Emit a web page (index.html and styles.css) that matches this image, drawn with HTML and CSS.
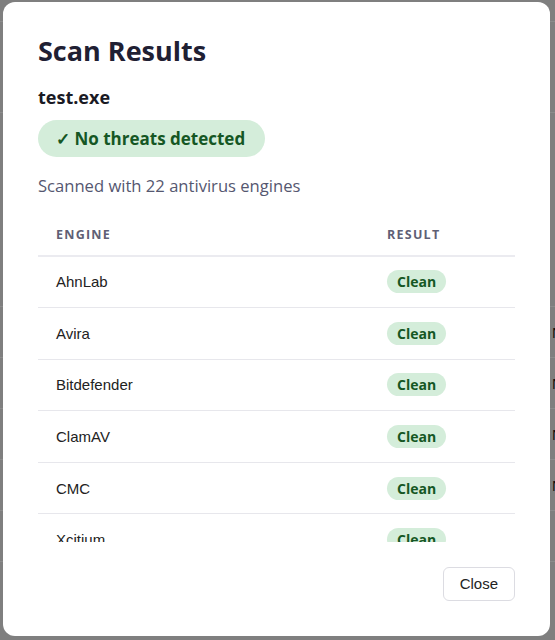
FILE: index.html
```html
<!DOCTYPE html>
<html lang="en">
<head>
<meta charset="utf-8">
<title>Scan Results</title>
<link rel="stylesheet" href="styles.css">
</head>
<body>
<div class="page">
  <div class="page-top"></div>
  <div class="page-section"></div>
  <div class="page-gap"></div>
  <div class="page-row"><span>N</span></div>
  <div class="page-row"><span>N</span></div>
  <div class="page-row"><span>N</span></div>
  <div class="page-row"><span>N</span></div>
  <div class="page-row"></div>
</div>

<div class="overlay">
  <div class="modal" role="dialog" aria-labelledby="title">
    <h1 class="title" id="title">Scan Results</h1>
    <div class="filename">test.exe</div>
    <div class="status">✓ No threats detected</div>
    <p class="summary">Scanned with 22 antivirus engines</p>
    <div class="results">
      <div class="row head">
        <div class="cell">Engine</div>
        <div class="cell">Result</div>
      </div>
      <div class="row"><div class="cell">AhnLab</div><div class="cell"><span class="pill">Clean</span></div></div>
      <div class="row"><div class="cell">Avira</div><div class="cell"><span class="pill">Clean</span></div></div>
      <div class="row"><div class="cell">Bitdefender</div><div class="cell"><span class="pill">Clean</span></div></div>
      <div class="row"><div class="cell">ClamAV</div><div class="cell"><span class="pill">Clean</span></div></div>
      <div class="row"><div class="cell">CMC</div><div class="cell"><span class="pill">Clean</span></div></div>
      <div class="row"><div class="cell">Xcitium</div><div class="cell"><span class="pill">Clean</span></div></div>
      <div class="row"><div class="cell">DrWeb</div><div class="cell"><span class="pill">Clean</span></div></div>
      <div class="row"><div class="cell">Emsisoft</div><div class="cell"><span class="pill">Clean</span></div></div>
      <div class="row"><div class="cell">ESET-NOD32</div><div class="cell"><span class="pill">Clean</span></div></div>
      <div class="row"><div class="cell">F-Secure</div><div class="cell"><span class="pill">Clean</span></div></div>
      <div class="row"><div class="cell">Fortinet</div><div class="cell"><span class="pill">Clean</span></div></div>
      <div class="row"><div class="cell">GData</div><div class="cell"><span class="pill">Clean</span></div></div>
      <div class="row"><div class="cell">Ikarus</div><div class="cell"><span class="pill">Clean</span></div></div>
      <div class="row"><div class="cell">K7AntiVirus</div><div class="cell"><span class="pill">Clean</span></div></div>
      <div class="row"><div class="cell">Kaspersky</div><div class="cell"><span class="pill">Clean</span></div></div>
      <div class="row"><div class="cell">Malwarebytes</div><div class="cell"><span class="pill">Clean</span></div></div>
      <div class="row"><div class="cell">McAfee</div><div class="cell"><span class="pill">Clean</span></div></div>
      <div class="row"><div class="cell">Microsoft</div><div class="cell"><span class="pill">Clean</span></div></div>
      <div class="row"><div class="cell">Panda</div><div class="cell"><span class="pill">Clean</span></div></div>
      <div class="row"><div class="cell">Sophos</div><div class="cell"><span class="pill">Clean</span></div></div>
      <div class="row"><div class="cell">Symantec</div><div class="cell"><span class="pill">Clean</span></div></div>
      <div class="row"><div class="cell">TrendMicro</div><div class="cell"><span class="pill">Clean</span></div></div>
    </div>
    <div class="footer">
      <button class="close" type="button">Close</button>
    </div>
  </div>
</div>
</body>
</html>
```

FILE: styles.css
```css
* { box-sizing: border-box; }

html, body {
  margin: 0;
  height: 100%;
}

body {
  background: #7f7f7f;
  font-family: "Open Sans", "Noto Sans", sans-serif;
  overflow: hidden;
}

/* dimmed page behind the dialog */
.page-top {
  height: 22px;
  border-bottom: 1px solid #8c8c8c;
}
.page-section {
  height: 91px;
  border-bottom: 1px solid #8c8c8c;
}
.page-gap {
  height: 194px;
  border-bottom: 1px solid #8c8c8c;
}
.page-row {
  height: 51px;
  border-bottom: 1px solid #8c8c8c;
  display: flex;
  align-items: center;
  padding-left: 552px;
  font-family: "Liberation Sans", Arial, sans-serif;
  font-size: 15px;
  color: #111;
}

/* dialog */
.overlay {
  position: fixed;
  inset: 0;
  display: flex;
  align-items: flex-start;
  padding: 2px 5px 4px 3px;
}

.modal {
  width: 547px;
  height: 634px;
  background: #fff;
  border-radius: 12px;
  padding: 32px 35px 35px 35px;
  display: flex;
  flex-direction: column;
}

.title {
  margin: 0;
  font-size: 27px;
  line-height: 34px;
  font-weight: 700;
  color: #1f2033;
}

.filename {
  margin-top: 17px;
  font-size: 18px;
  line-height: 24px;
  font-weight: 700;
  color: #1a1a24;
}

.status {
  align-self: flex-start;
  margin-top: 11px;
  background: #d4edda;
  color: #155724;
  font-size: 17px;
  line-height: 21px;
  font-weight: 700;
  padding: 8px 20px 8px 18px;
  border-radius: 19px;
}

.summary {
  margin: 17px 0 0 0;
  font-size: 16.6px;
  line-height: 24px;
  color: #555770;
}

.results {
  margin-top: 15px;
  height: 329px;
  overflow-y: auto;
  scrollbar-width: none;
}
.results::-webkit-scrollbar { display: none; }

.row {
  display: grid;
  grid-template-columns: 331px 1fr;
  border-bottom: 1px solid #e7e7ec;
}

.cell {
  height: 50.6px;
  padding: 0 18px;
  display: flex;
  align-items: center;
  font-family: "Liberation Sans", Arial, sans-serif;
  font-size: 15px;
  color: #222;
}

.head {
  position: sticky;
  top: 0;
  background: #fff;
  border-bottom: 2px solid #ebebf0;
}
.head .cell {
  height: 41.5px;
  padding-top: 1px;
  font-family: "Open Sans", "Noto Sans", sans-serif;
  font-size: 12.5px;
  font-weight: 700;
  text-transform: uppercase;
  letter-spacing: 0.1em;
  color: #5f5f75;
}

.pill {
  display: inline-block;
  background: #d4edda;
  color: #155724;
  font-family: "Open Sans", "Noto Sans", sans-serif;
  font-size: 14px;
  line-height: 15px;
  font-weight: 700;
  padding: 4px 10px;
  border-radius: 12px;
}

.footer {
  margin-top: auto;
  display: flex;
  justify-content: flex-end;
}

.close {
  font-family: "Liberation Sans", Arial, sans-serif;
  font-size: 15px;
  line-height: 21px;
  color: #222;
  background: #fff;
  border: 1px solid #dcdce2;
  border-radius: 6px;
  padding: 5px 16px 6px 16px;
  cursor: pointer;
}
```
